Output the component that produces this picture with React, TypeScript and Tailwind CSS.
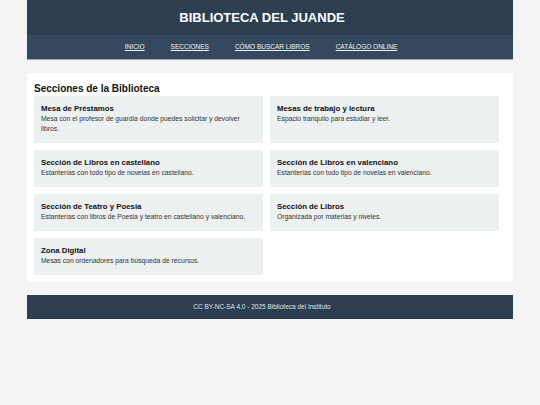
import React from "react";

const sections = [
  { t: "Mesa de Préstamos", d: "Mesa con el profesor de guardia donde puedes solicitar y devolver libros." },
  { t: "Mesas de trabajo y lectura", d: "Espacio tranquilo para estudiar y leer." },
  { t: "Sección de Libros en castellano", d: "Estanterías con todo tipo de novelas en castellano." },
  { t: "Sección de Libros en valenciano", d: "Estanterías con todo tipo de novelas en valenciano." },
  { t: "Sección de Teatro y Poesia", d: "Estanterías con libros de Poesia y teatro en castellano y valenciano." },
  { t: "Sección de Libros", d: "Organizada por materias y niveles." },
  { t: "Zona Digital", d: "Mesas con ordenadores para búsqueda de recursos." },
];

export default function App() {
  return (
    <div
      className="min-h-[405px] bg-[#f4f4f4] pb-[40px]"
      style={{ fontFamily: '"Liberation Sans", Arial, sans-serif' }}
    >
      <div className="mx-auto w-[486px]">
        <header className="bg-[#2c3e50]">
          <h1 className="flex h-[35px] items-center justify-center pr-[16px] text-[13px] font-bold text-white">
            BIBLIOTECA DEL JUANDE
          </h1>
          <nav className="flex h-[25px] items-center justify-center gap-[26px] border-b border-[#9aa7b6] bg-[#34495e] pr-[18px] text-[6.5px] text-[#ecf0f1]">
            <a className="underline">INICIO</a>
            <a className="underline">SECCIONES</a>
            <a className="underline">CÓMO BUSCAR LIBROS</a>
            <a className="underline">CATÁLOGO ONLINE</a>
          </nav>
        </header>

        <main className="mt-[13px] bg-white pb-[7px] pl-[7px] pr-[14px] pt-[9px]">
          <h2 className="text-[10px] font-bold leading-[14px] text-[#111]">
            Secciones de la Biblioteca
          </h2>
          <div className="grid grid-cols-2 gap-x-[7px] gap-y-[7px]">
            {sections.map((s) => (
              <div key={s.t} className="bg-[#ecf0f1] px-[7px] pb-[9px] pt-[8px]">
                <h3 className="text-[7.8px] font-bold leading-[10px] text-[#111]">{s.t}</h3>
                <p className="text-[6.75px] leading-[10px] text-[#333]">{s.d}</p>
              </div>
            ))}
          </div>
        </main>

        <footer className="mt-[13px] flex h-[24px] items-center justify-center bg-[#2c3e50] pr-[16px] text-[6.5px] text-[#dfe4ea]">
          CC BY-NC-SA 4.0 - 2025 Biblioteca del Instituto
        </footer>
      </div>
    </div>
  );
}
